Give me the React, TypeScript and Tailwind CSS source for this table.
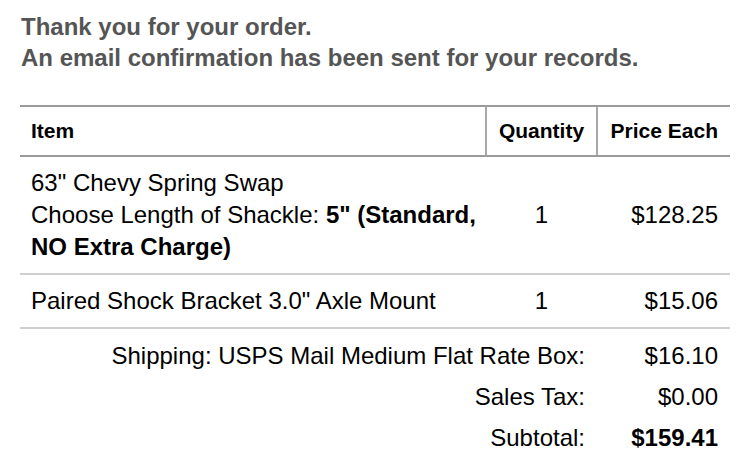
const items = [
  {
    id: 1,
    name: '63" Chevy Spring Swap',
    option: { label: "Choose Length of Shackle:", value: '5" (Standard, NO Extra Charge)' },
    quantity: 1,
    price: "$128.25",
  },
  {
    id: 2,
    name: 'Paired Shock Bracket 3.0" Axle Mount',
    quantity: 1,
    price: "$15.06",
  },
]

const totals = [
  { label: "Shipping: USPS Mail Medium Flat Rate Box:", value: "$16.10" },
  { label: "Sales Tax:", value: "$0.00" },
  { label: "Subtotal:", value: "$159.41", strong: true },
]

export default function App() {
  return (
    <div className="min-h-screen w-[750px] bg-white font-['Liberation_Sans',Arial,sans-serif] text-black">
      <div className="pl-[21px] pt-[11px] text-[24px] font-bold leading-[31px] text-[#555555]">
        <p>Thank you for your order.</p>
        <p>An email confirmation has been sent for your records.</p>
      </div>

      <div className="ml-[20px] mt-[32px] w-[710px]">
        {/* header */}
        <div className="grid grid-cols-[465px_111px_134px] border-y-2 border-[#9b9b9b] text-[21px] font-bold">
          <div className="flex h-[48px] items-center pl-[11px]">Item</div>
          <div className="flex h-[48px] items-center justify-center border-l-2 border-[#a8a8a8]">Quantity</div>
          <div className="flex h-[48px] items-center justify-end border-l-2 border-[#a8a8a8] pr-[12px]">Price Each</div>
        </div>

        {/* line items */}
        {items.map((item) => (
          <div
            key={item.id}
            className="grid grid-cols-[465px_111px_134px] border-b-2 border-[#cfcfcf] text-[24px] leading-[32px]"
          >
            <div className="py-[10px] pl-[11px] pr-[4px]">
              <div>{item.name}</div>
              {item.option && (
                <div>
                  {item.option.label} <span className="font-bold">{item.option.value}</span>
                </div>
              )}
            </div>
            <div className="flex items-center justify-center pl-[2px]">{item.quantity}</div>
            <div className="flex items-center justify-end pr-[12px]">{item.price}</div>
          </div>
        ))}

        {/* totals */}
        <div className="mt-[6px] text-[24px] leading-[32px]">
          {totals.map((row) => (
            <div key={row.label} className="grid grid-cols-[576px_134px] py-[4.5px]">
              <div className="pr-[11px] text-right">{row.label}</div>
              <div className={row.strong ? "pr-[12px] text-right font-bold" : "pr-[12px] text-right"}>
                {row.value}
              </div>
            </div>
          ))}
        </div>
      </div>
    </div>
  )
}
